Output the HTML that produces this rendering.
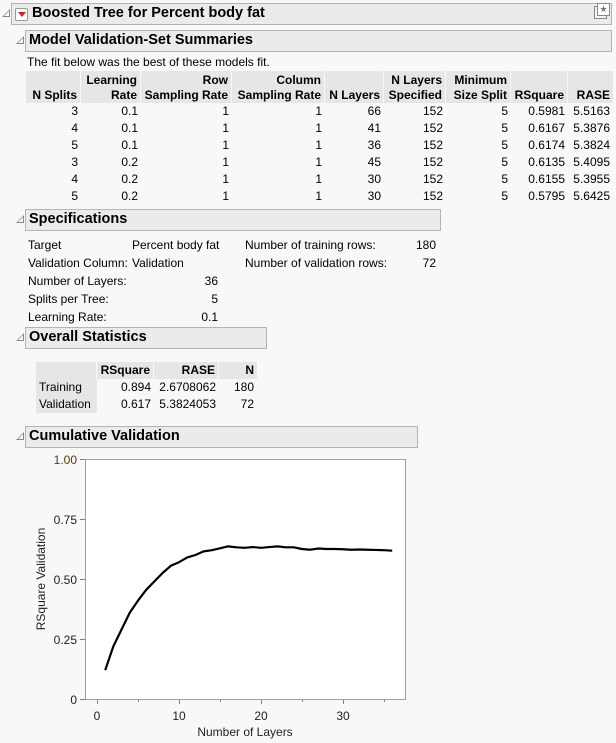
<!DOCTYPE html>
<html><head><meta charset="utf-8"><style>
body{margin:0;width:616px;height:743px;background:#f8f8f8;font-family:"Liberation Sans",sans-serif;font-size:12px;color:#000;position:relative;overflow:hidden}
.a{position:absolute;white-space:nowrap}
.hd{position:absolute;background:#ebebeb;border:1px solid #b4b4b4;box-sizing:border-box;font-weight:bold;font-size:14.5px;line-height:19px;padding-left:3px}
.tri{position:absolute;width:0;height:0;border-left:8px solid transparent;border-bottom:8px solid #888}
.tri::after{content:"";position:absolute;left:-6px;top:2px;border-left:5px solid transparent;border-bottom:5px solid #f8f8f8}
table{border-collapse:separate;border-spacing:0;position:absolute;font-size:12px}
td,th{padding:0 3px;text-align:right;height:17px;line-height:17px}
th{background:#e6e6e6;font-weight:bold;border-right:1px solid #f8f8f8;line-height:15px;vertical-align:bottom}
</style></head><body>
<div class="tri" style="left:2px;top:9px"></div>
<div class="hd" style="left:11px;top:3px;width:601px;height:22px;padding-left:20px">Boosted Tree for Percent body fat</div>
<div class="a" style="left:15px;top:8px;width:11px;height:11px;border:1px solid #999;background:#fff;border-radius:2px"><div style="position:absolute;left:2px;top:3px;border-left:4px solid transparent;border-right:4px solid transparent;border-top:5px solid #d42020"></div></div>
<div class="a" style="left:594px;top:6px;width:11px;height:11px;border:1px solid #888;background:#f4f4f4"></div>
<div class="a" style="left:597px;top:3px;width:11px;height:11px;border:1px solid #888;background:#fff;font-size:9px;line-height:11px;text-align:center;color:#777">★</div>

<div class="tri" style="left:16px;top:36px"></div>
<div class="hd" style="left:25px;top:30px;width:587px;height:22px">Model Validation-Set Summaries</div>
<div class="a" style="left:27px;top:55px">The fit below was the best of these models fit.</div>
<table style="left:26px;top:71px">
<tr><th style="width:48px;height:32px">N Splits</th><th style="width:53px">Learning<br>Rate</th><th style="width:84px">Row<br>Sampling Rate</th><th style="width:86px">Column<br>Sampling Rate</th><th style="width:52px">N Layers</th><th style="width:55px">N Layers<br>Specified</th><th style="width:58px">Minimum<br>Size Split</th><th style="width:50px">RSquare</th><th style="width:39px;border-right:0">RASE</th></tr>
<tr><td>3</td><td>0.1</td><td>1</td><td>1</td><td>66</td><td>152</td><td>5</td><td>0.5981</td><td>5.5163</td></tr>
<tr><td>4</td><td>0.1</td><td>1</td><td>1</td><td>41</td><td>152</td><td>5</td><td>0.6167</td><td>5.3876</td></tr>
<tr><td>5</td><td>0.1</td><td>1</td><td>1</td><td>36</td><td>152</td><td>5</td><td>0.6174</td><td>5.3824</td></tr>
<tr><td>3</td><td>0.2</td><td>1</td><td>1</td><td>45</td><td>152</td><td>5</td><td>0.6135</td><td>5.4095</td></tr>
<tr><td>4</td><td>0.2</td><td>1</td><td>1</td><td>30</td><td>152</td><td>5</td><td>0.6155</td><td>5.3955</td></tr>
<tr><td>5</td><td>0.2</td><td>1</td><td>1</td><td>30</td><td>152</td><td>5</td><td>0.5795</td><td>5.6425</td></tr>
</table>

<div class="tri" style="left:16px;top:215px"></div>
<div class="hd" style="left:25px;top:209px;width:416px;height:22px">Specifications</div>
<div class="a" style="left:28px;top:236px;line-height:18px">Target<br>Validation Column:<br>Number of Layers:<br>Splits per Tree:<br>Learning Rate:</div>
<div class="a" style="left:132px;top:236px;line-height:18px">Percent body fat<br>Validation</div>
<div class="a" style="left:180px;top:272px;width:38px;text-align:right;line-height:18px">36<br>5<br>0.1</div>
<div class="a" style="left:245px;top:236px;line-height:18px">Number of training rows:<br>Number of validation rows:</div>
<div class="a" style="left:396px;top:236px;width:40px;text-align:right;line-height:18px">180<br>72</div>

<div class="tri" style="left:16px;top:333px"></div>
<div class="hd" style="left:25px;top:327px;width:242px;height:22px">Overall Statistics</div>
<table style="left:36px;top:362px">
<tr><th style="width:54px;height:17px;line-height:17px"></th><th style="width:50px;line-height:17px">RSquare</th><th style="width:58px;line-height:17px">RASE</th><th style="width:32px;line-height:17px;border-right:0">N</th></tr>
<tr><td style="background:#e6e6e6;text-align:left">Training</td><td>0.894</td><td>2.6708062</td><td>180</td></tr>
<tr><td style="background:#e6e6e6;text-align:left">Validation</td><td>0.617</td><td>5.3824053</td><td>72</td></tr>
</table>

<div class="tri" style="left:16px;top:432px"></div>
<div class="hd" style="left:25px;top:426px;width:393px;height:22px">Cumulative Validation</div>

<svg class="a" style="left:0;top:0" width="616" height="743">
<rect x="85.5" y="459.5" width="320" height="240" fill="#fff" stroke="#a0a0a0"/>
<g stroke="#808080"><line x1="80" y1="459.5" x2="85" y2="459.5"/><line x1="80" y1="519.5" x2="85" y2="519.5"/><line x1="80" y1="579.5" x2="85" y2="579.5"/><line x1="80" y1="639.5" x2="85" y2="639.5"/><line x1="80" y1="699.5" x2="85" y2="699.5"/>
<line x1="97.5" y1="700" x2="97.5" y2="704"/><line x1="179.5" y1="700" x2="179.5" y2="704"/><line x1="261.5" y1="700" x2="261.5" y2="704"/><line x1="343.5" y1="700" x2="343.5" y2="704"/>
<line x1="138.5" y1="700" x2="138.5" y2="702"/><line x1="220.5" y1="700" x2="220.5" y2="702"/><line x1="302.5" y1="700" x2="302.5" y2="702"/><line x1="384.5" y1="700" x2="384.5" y2="702"/></g>
<g font-family="Liberation Sans" font-size="12" text-anchor="end" fill="#222">
<text x="77" y="464" fill="#5a3a00">1.00</text><text x="77" y="524">0.75</text><text x="77" y="584">0.50</text><text x="77" y="644">0.25</text><text x="77" y="704">0</text></g>
<g font-family="Liberation Sans" font-size="12" text-anchor="middle" fill="#222">
<text x="97" y="720">0</text><text x="179" y="720">10</text><text x="261" y="720">20</text><text x="343" y="720">30</text>
<text x="245" y="736">Number of Layers</text>
<text transform="translate(45,579) rotate(-90)">RSquare Validation</text></g>
<g transform="translate(97,699) scale(8.2,-240)">
<polyline fill="none" stroke="#000" stroke-width="2.2" vector-effect="non-scaling-stroke" stroke-linejoin="round" points="1,0.12 2,0.22 3,0.29 4,0.36 5,0.41 6,0.455 7,0.49 8,0.525 9,0.555 10,0.57 11,0.59 12,0.6 13,0.615 14,0.62 15,0.628 16,0.636 17,0.632 18,0.63 19,0.633 20,0.63 21,0.633 22,0.636 23,0.632 24,0.632 25,0.625 26,0.622 27,0.627 28,0.625 29,0.625 30,0.624 31,0.622 32,0.623 33,0.622 34,0.621 35,0.62 36,0.618"/></g>
</svg>
</body></html>
